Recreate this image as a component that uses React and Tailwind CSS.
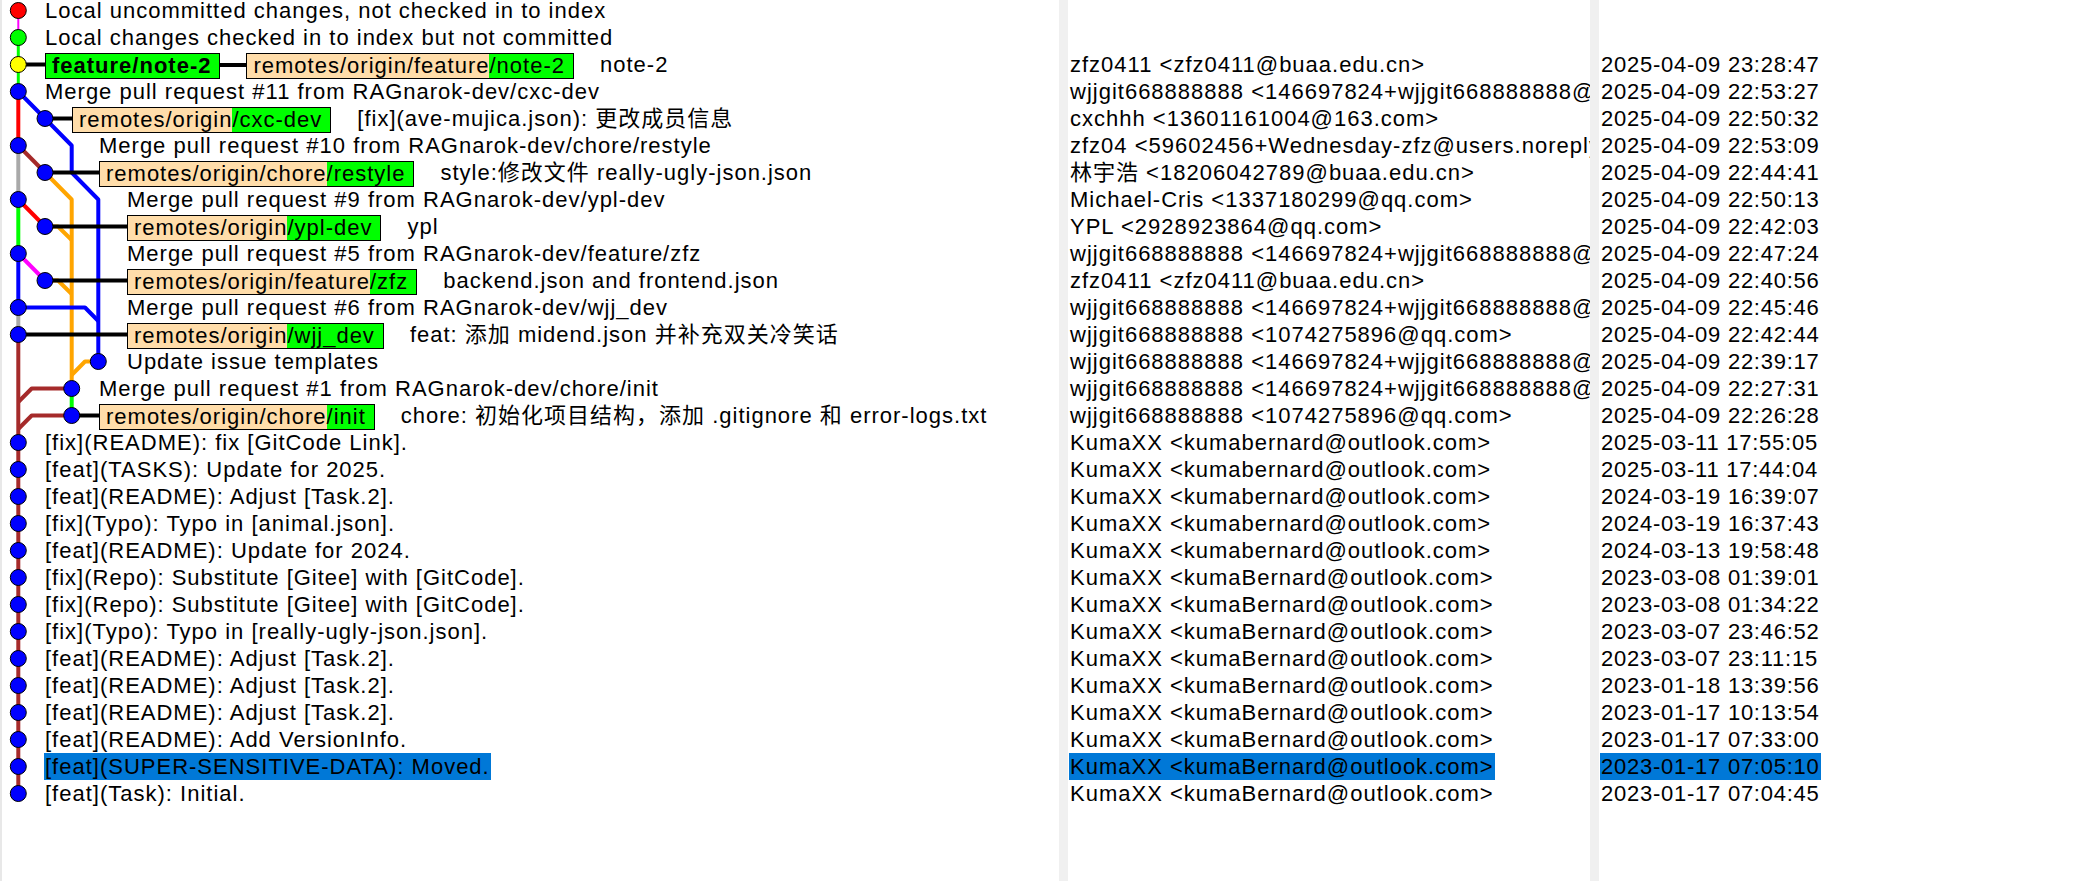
const L = [18.3, 45, 71.7, 98.3];
const Y = (i) => 10.5 + 27 * i;

const KUMA = "KumaXX <kumabernard@outlook.com>";
const KUMAB = "KumaXX <kumaBernard@outlook.com>";
const WJJ = "wjjgit668888888 <146697824+wjjgit668888888@users.noreply.github.com>";
const WJJQQ = "wjjgit668888888 <1074275896@qq.com>";

const rows = [
  { x: 44, text: "Local uncommitted changes, not checked in to index" },
  { x: 44, text: "Local changes checked in to index but not committed" },
  { x: 45, local: "feature/note-2", remote: ["remotes/origin/feature", "/note-2"], text: "note-2", author: "zfz0411 <zfz0411@buaa.edu.cn>", date: "2025-04-09 23:28:47" },
  { x: 44, text: "Merge pull request #11 from RAGnarok-dev/cxc-dev", author: WJJ, date: "2025-04-09 22:53:27" },
  { x: 72, remote: ["remotes/origin", "/cxc-dev"], text: "[fix](ave-mujica.json): 更改成员信息", author: "cxchhh <13601161004@163.com>", date: "2025-04-09 22:50:32" },
  { x: 98, text: "Merge pull request #10 from RAGnarok-dev/chore/restyle", author: "zfz04 <59602456+Wednesday-zfz@users.noreply.github.com>", date: "2025-04-09 22:53:09" },
  { x: 99, remote: ["remotes/origin/chore", "/restyle"], text: "style:修改文件 really-ugly-json.json", author: "林宇浩 <18206042789@buaa.edu.cn>", date: "2025-04-09 22:44:41" },
  { x: 126, text: "Merge pull request #9 from RAGnarok-dev/ypl-dev", author: "Michael-Cris <1337180299@qq.com>", date: "2025-04-09 22:50:13" },
  { x: 127, remote: ["remotes/origin", "/ypl-dev"], text: "ypl", author: "YPL <2928923864@qq.com>", date: "2025-04-09 22:42:03" },
  { x: 126, text: "Merge pull request #5 from RAGnarok-dev/feature/zfz", author: WJJ, date: "2025-04-09 22:47:24" },
  { x: 127, remote: ["remotes/origin/feature", "/zfz"], text: "backend.json and frontend.json", author: "zfz0411 <zfz0411@buaa.edu.cn>", date: "2025-04-09 22:40:56" },
  { x: 126, text: "Merge pull request #6 from RAGnarok-dev/wjj_dev", author: WJJ, date: "2025-04-09 22:45:46" },
  { x: 127, remote: ["remotes/origin", "/wjj_dev"], text: "feat: 添加 midend.json 并补充双关冷笑话", author: WJJQQ, date: "2025-04-09 22:42:44" },
  { x: 126, text: "Update issue templates", author: WJJ, date: "2025-04-09 22:39:17" },
  { x: 98, text: "Merge pull request #1 from RAGnarok-dev/chore/init", author: WJJ, date: "2025-04-09 22:27:31" },
  { x: 99, remote: ["remotes/origin/chore", "/init"], text: "chore: 初始化项目结构，添加 .gitignore 和 error-logs.txt", author: WJJQQ, date: "2025-04-09 22:26:28" },
  { x: 44, text: "[fix](README): fix [GitCode Link].", author: KUMA, date: "2025-03-11 17:55:05" },
  { x: 44, text: "[feat](TASKS): Update for 2025.", author: KUMA, date: "2025-03-11 17:44:04" },
  { x: 44, text: "[feat](README): Adjust [Task.2].", author: KUMA, date: "2024-03-19 16:39:07" },
  { x: 44, text: "[fix](Typo): Typo in [animal.json].", author: KUMA, date: "2024-03-19 16:37:43" },
  { x: 44, text: "[feat](README): Update for 2024.", author: KUMA, date: "2024-03-13 19:58:48" },
  { x: 44, text: "[fix](Repo): Substitute [Gitee] with [GitCode].", author: KUMAB, date: "2023-03-08 01:39:01" },
  { x: 44, text: "[fix](Repo): Substitute [Gitee] with [GitCode].", author: KUMAB, date: "2023-03-08 01:34:22" },
  { x: 44, text: "[fix](Typo): Typo in [really-ugly-json.json].", author: KUMAB, date: "2023-03-07 23:46:52" },
  { x: 44, text: "[feat](README): Adjust [Task.2].", author: KUMAB, date: "2023-03-07 23:11:15" },
  { x: 44, text: "[feat](README): Adjust [Task.2].", author: KUMAB, date: "2023-01-18 13:39:56" },
  { x: 44, text: "[feat](README): Adjust [Task.2].", author: KUMAB, date: "2023-01-17 10:13:54" },
  { x: 44, text: "[feat](README): Add VersionInfo.", author: KUMAB, date: "2023-01-17 07:33:00" },
  { x: 44, text: "[feat](SUPER-SENSITIVE-DATA): Moved.", author: KUMAB, date: "2023-01-17 07:05:10", sel: true },
  { x: 44, text: "[feat](Task): Initial.", author: KUMAB, date: "2023-01-17 07:04:45" },
];

// dot lane per row
const dots = [0, 0, 0, 0, 1, 0, 1, 0, 1, 0, 1, 0, 0, 3, 2, 2, ...Array(14).fill(0)];
const dotFill = { 0: "#ff0000", 1: "#00ff00", 2: "#ffff00" };

// edges: [color, width, points]
const edges = [
  ["#ff00ff", 2, [[L[0], Y(0)], [L[0], Y(1)]]],
  ["#00ff00", 3, [[L[0], Y(1)], [L[0], Y(2)]]],
  ["#00ff00", 3, [[L[0], Y(2)], [L[0], Y(3)]]],
  ["#ff0000", 4, [[L[0], Y(3)], [L[0], Y(5)]]],
  ["#0000ff", 4, [[L[0], Y(3)], [L[1], Y(4)], [L[2], Y(5)], [L[2], Y(6)], [L[3], Y(7)], [L[3], Y(13)]]],
  ["#a9a9a9", 4, [[L[0], Y(5)], [L[0], Y(7)]]],
  ["#a52a2a", 4, [[L[0], Y(5)], [L[1], Y(6)]]],
  ["#ffa500", 4, [[L[1], Y(6)], [L[2], Y(7)], [L[2], Y(14)]]],
  ["#00ff00", 4, [[L[0], Y(7)], [L[0], Y(9)]]],
  ["#ff0000", 4, [[L[0], Y(7)], [L[1], Y(8)]]],
  ["#ffa500", 4, [[L[1], Y(8)], [58, Y(8)], [L[2], Y(8) + 13.5]]],
  ["#0000ff", 4, [[L[0], Y(9)], [L[0], Y(11)]]],
  ["#ff00ff", 4, [[L[0], Y(9)], [L[1], Y(10)]]],
  ["#ffa500", 4, [[L[1], Y(10)], [58, Y(10)], [L[2], Y(10) + 13.5]]],
  ["#0000ff", 4, [[L[0], Y(11)], [85, Y(11)], [L[3], Y(11) + 13.5]]],
  ["#a9a9a9", 4, [[L[0], Y(11)], [L[0], Y(12)]]],
  ["#a52a2a", 4, [[L[0], Y(12)], [L[0], Y(29)]]],
  ["#ffa500", 4, [[L[3], Y(13)], [85, Y(13)], [L[2], Y(13) + 13.5]]],
  ["#a52a2a", 4, [[L[2], Y(14)], [31.7, Y(14)], [L[0], Y(14) + 13.5]]],
  ["#00ff00", 4, [[L[2], Y(14)], [L[2], Y(15)]]],
  ["#a52a2a", 4, [[L[2], Y(15)], [31.7, Y(15)], [L[0], Y(15) + 13.5]]],
];

// black connectors from dot to first tag box
const connectors = [
  [L[0], 45, 2],
  [L[1], 72, 4],
  [L[1], 99, 6],
  [L[1], 127, 8],
  [L[1], 127, 10],
  [L[0], 127, 12],
  [L[2], 99, 15],
];

function Graph() {
  return (
    <svg className="absolute left-0 top-0 pointer-events-none" width="140" height="881">
      {edges.map(([c, w, pts], i) => (
        <polyline key={i} points={pts.map((p) => p.join(",")).join(" ")} fill="none" stroke={c} strokeWidth={w} strokeLinejoin="round" />
      ))}
      {connectors.map(([x1, x2, r], i) => (
        <line key={i} x1={x1} y1={Y(r)} x2={x2} y2={Y(r)} stroke="#000" strokeWidth="4" />
      ))}
      {dots.map((lane, i) => (
        <circle key={i} cx={L[lane]} cy={Y(i)} r="8" fill={dotFill[i] || "#0000ff"} stroke="#000" strokeWidth="1" />
      ))}
    </svg>
  );
}

function LocalTag({ name }) {
  return (
    <span className="inline-flex items-center h-[26px] mt-[2px] border border-black bg-[#00ff00] font-bold pl-[6px] pr-[8px] leading-[24px]">
      {name}
    </span>
  );
}

function RemoteTag({ parts }) {
  return (
    <span className="inline-flex h-[26px] mt-[2px] border border-black leading-[24px]">
      <span className="bg-[#ffddaa] pl-[6px]">{parts[0]}</span>
      <span className="bg-[#00ff00] pr-[8px]">{parts[1]}</span>
    </span>
  );
}

function Hl({ on, children }) {
  return <span className={on ? "bg-[#0078d7] px-[1px]" : "px-[1px]"}>{children}</span>;
}

export default function App() {
  return (
    <div
      className="relative flex h-[881px] w-[2088px] overflow-hidden bg-white text-black text-[22px] leading-[27px]"
      style={{ fontFamily: '"Liberation Sans", Arial, "Noto Sans CJK SC", sans-serif' }}
    >
      {/* commit graph + subjects */}
      <div className="w-[1059px] shrink-0 border-l-2 border-[#e8e8e8] overflow-hidden tracking-[1px]">
        <div className="mt-[-3px]">
          {rows.map((r, i) => (
            <div key={i} className="h-[27px] flex items-center whitespace-nowrap" style={{ paddingLeft: r.x - 2 }}>
              {r.local && <LocalTag name={r.local} />}
              {r.local && <span className="w-[26px] h-[4px] bg-black" />}
              {r.remote && <RemoteTag parts={r.remote} />}
              {r.remote ? <span className="ml-[26px]">{r.text}</span> : <Hl on={r.sel}>{r.text}</Hl>}
            </div>
          ))}
        </div>
      </div>
      <div className="w-[9px] shrink-0 bg-[#f0f0f0]" />
      {/* authors */}
      <div className="w-[522px] shrink-0 overflow-hidden pl-[1px] tracking-[1px]">
        <div className="mt-[-3px]">
          {rows.map((r, i) => (
            <div key={i} className="h-[27px] flex items-center whitespace-nowrap">
              {r.author && <Hl on={r.sel}>{r.author}</Hl>}
            </div>
          ))}
        </div>
      </div>
      <div className="w-[9px] shrink-0 bg-[#f0f0f0]" />
      {/* dates */}
      <div className="flex-1 pl-[1px] tracking-[0.75px]">
        <div className="mt-[-3px]">
          {rows.map((r, i) => (
            <div key={i} className="h-[27px] flex items-center whitespace-nowrap">
              {r.date && <Hl on={r.sel}>{r.date}</Hl>}
            </div>
          ))}
        </div>
      </div>
      <Graph />
    </div>
  );
}
